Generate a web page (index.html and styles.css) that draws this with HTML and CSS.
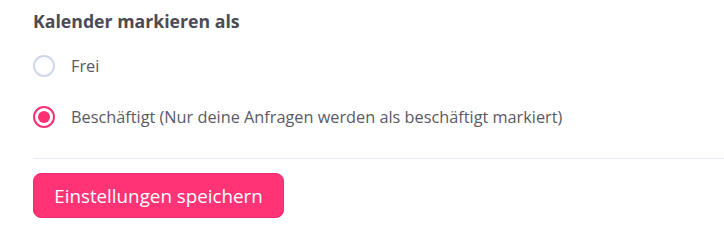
FILE: index.html
```html
<!DOCTYPE html>
<html lang="de">
<head>
<meta charset="utf-8">
<link rel="stylesheet" href="styles.css">
</head>
<body>
<div class="panel">
  <h2 class="title">Kalender markieren als</h2>
  <div class="options">
    <label class="option">
      <span class="radio"></span>
      <span class="label">Frei</span>
    </label>
    <label class="option">
      <span class="radio checked"></span>
      <span class="label">Beschäftigt (Nur deine Anfragen werden als beschäftigt markiert)</span>
    </label>
  </div>
  <div class="footer">
    <button class="save">Einstellungen speichern</button>
  </div>
</div>
</body>
</html>
```
FILE: styles.css
```css
html, body {
  margin: 0;
  padding: 0;
  background: #ffffff;
}
body {
  font-family: "Open Sans", "Lato", sans-serif;
}
.panel {
  padding: 10px 0 0 33px;
}
.title {
  margin: 0;
  font-size: 17.7px;
  font-weight: 700;
  color: #4b4b55;
  line-height: 22px;
}
.options {
  display: flex;
  flex-direction: column;
  gap: 29px;
  padding: 23px 0 30px;
  border-bottom: 1px solid #e9e9f1;
}
.option {
  display: flex;
  align-items: center;
  gap: 16px;
  height: 22px;
}
.radio {
  box-sizing: border-box;
  width: 22px;
  height: 22px;
  border: 2px solid #cfd7ea;
  border-radius: 50%;
  flex: none;
  display: flex;
  align-items: center;
  justify-content: center;
}
.radio.checked {
  border-color: #ff2f74;
}
.radio.checked::after {
  content: "";
  width: 12px;
  height: 12px;
  border-radius: 50%;
  background: #ff2f74;
}
.label {
  font-size: 16.3px;
  color: #5a5a64;
}
.footer {
  padding-top: 14px;
}
.save {
  box-sizing: border-box;
  width: 251px;
  height: 45px;
  border: 1px solid #f52a6c;
  border-radius: 8px;
  background: #ff3375;
  color: #ffffff;
  font-family: inherit;
  font-size: 18.8px;
  padding: 0;
}
```
